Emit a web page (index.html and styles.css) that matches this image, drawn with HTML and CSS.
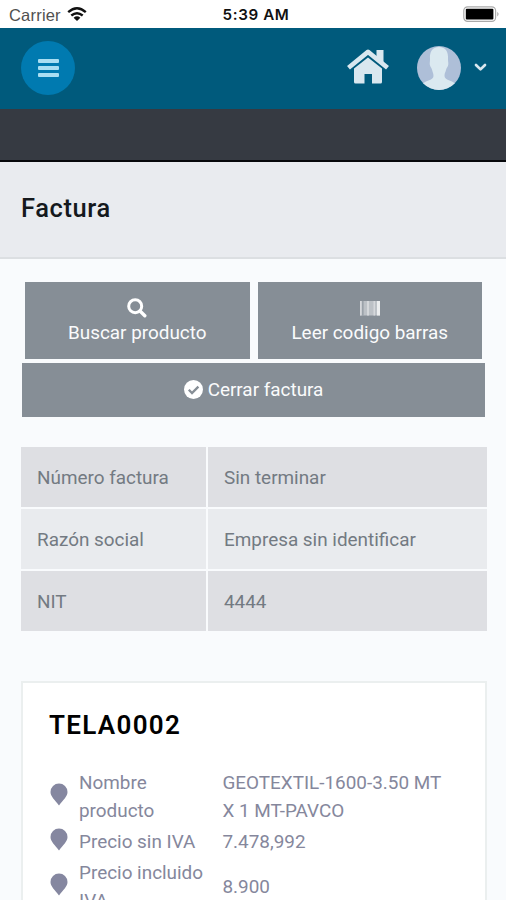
FILE: index.html
```html
<!DOCTYPE html>
<html lang="es">
<head>
<meta charset="utf-8">
<title>Factura</title>
<link rel="stylesheet" href="styles.css">
</head>
<body>
<div class="status">
  <div class="carrier"><span>Carrier</span>
    <svg class="wifi" width="20" height="15" viewBox="0 0 20 15"><path d="M1.2 5.200Q10-2.600 18.800 5.200M4.300 8.500Q10 3.800 15.700 8.500" fill="none" stroke="#111" stroke-width="2.400"/><path d="M6.600 10.700Q10 7.900 13.400 10.700L10 14z" fill="#111"/></svg>
  </div>
  <div class="clock">5:39 AM</div>
  <svg class="battery" width="37" height="17" viewBox="0 0 37 17"><rect x=".8" y=".8" width="31.800" height="14.600" rx="3.800" fill="#fff" stroke="#aaa" stroke-width="1.200"/><rect x="2.800" y="2.800" width="27.600" height="10.600" rx="1" fill="#000"/><path d="M34.400 5.800q2.200 2.300 0 4.600z" fill="#999"/></svg>
</div>
<header class="topbar">
  <div class="menu"><i></i><i></i><i></i></div>
  <svg class="home" width="44" height="35" viewBox="0 0 44 35"><path d="M2.500 18.700 22 2.900l19.500 15.800" fill="none" stroke="#d9e7ef" stroke-width="4.600" stroke-linejoin="round"/><path d="M30.500 1h7v13l-7-5.500zM8 19.500 22 8.500l14 11v13.500q0 1.500-1.500 1.500H26V25h-7.500v9.500h-9q-1.500 0-1.500-1.500z" fill="#d9e7ef"/></svg>
  <svg class="avatar" width="44" height="44" viewBox="0 0 44 44"><defs><clipPath id="disc"><circle cx="22" cy="22" r="22"/></clipPath></defs><g clip-path="url(#disc)"><path fill="#aebfd8" d="M0 0h44v44H0z"/><path d="M22 1c-7 0-9.500 5-9 12 .1 3-.8 4.500.2 7 .6 1.600 1.400 2 1.900 4 .5 2.300 1.300 3 1.400 6 .1 5-9.500 4-11.500 9v5h34v-5c-2-5-11.500-4-11.500-9 0-3 1-3.700 1.500-6 .5-2 1.300-2.400 1.900-4 1-2.500 0-4 .1-7C31.500 6 29 1 22 1z" fill="#dbe9f0"/></g></svg>
  <svg class="chev" width="13" height="9" viewBox="0 0 13 9"><path d="m2 2 4.500 4.400L11 2" fill="none" stroke="#d9e7ef" stroke-width="2.700" stroke-linecap="round" stroke-linejoin="round"/></svg>
</header>
<div class="band"></div>
<div class="heading"><h1>Factura</h1></div>
<main>
  <div class="actions">
    <div class="btn">
      <svg class="icon" width="20" height="20" viewBox="0 0 20 20"><circle cx="8.200" cy="8.200" r="6.500" fill="none" stroke="#fff" stroke-width="3"/><path d="m13 13 4.800 4.800" stroke="#fff" stroke-width="3.400" stroke-linecap="round"/></svg>
      <span>Buscar producto</span>
    </div>
    <div class="btn">
      <svg class="icon" width="20" height="20" viewBox="0 0 20 20"><path fill="#bcc1c6" d="M0 3h20v14.500H0z"/><path fill="#d5d8db" d="M0 3h1.500v14.500H0zM7 3h2v14.500H7zM13.500 3h1.500v14.500h-1.500z"/><path fill="#eceeef" d="M17 3h3v14.500h-3z"/><path fill="#929aa2" d="M2.200 3h1.300v14.500H2.200z"/></svg>
      <span>Leer codigo barras</span>
    </div>
  </div>
  <div class="btn wide">
    <svg width="19" height="19" viewBox="0 0 19 19"><circle cx="9.500" cy="9.500" r="9.500" fill="#fff"/><path d="m4.800 9.800 3.200 3.200 6.400-6.400" fill="none" stroke="#868e96" stroke-width="2.300"/></svg>
    <span>Cerrar factura</span>
  </div>
  <div class="info">
    <div>Número factura</div><div>Sin terminar</div>
    <div class="light">Razón social</div><div class="light">Empresa sin identificar</div>
    <div>NIT</div><div>4444</div>
  </div>
  <section class="card">
    <h2>TELA0002</h2>
    <div class="row"><svg class="pin" width="18" height="23" viewBox="0 0 18 23"><path d="M9 .5a8.500 8.500 0 0 1 8.500 8.500c0 4.500-4.500 8.200-8.500 13.500C5 17.200.5 13.500.5 9A8.500 8.500 0 0 1 9 .5z" fill="#8587a0"/></svg><div>Nombre producto</div><div>GEOTEXTIL-1600-3.50 MT X 1 MT-PAVCO</div></div>
    <div class="row"><svg class="pin" width="18" height="23" viewBox="0 0 18 23"><path d="M9 .5a8.500 8.500 0 0 1 8.500 8.500c0 4.500-4.500 8.200-8.500 13.500C5 17.200.5 13.500.5 9A8.500 8.500 0 0 1 9 .5z" fill="#8587a0"/></svg><div>Precio sin IVA</div><div>7.478,992</div></div>
    <div class="row"><svg class="pin" width="18" height="23" viewBox="0 0 18 23"><path d="M9 .5a8.500 8.500 0 0 1 8.500 8.500c0 4.500-4.500 8.200-8.500 13.500C5 17.200.5 13.500.5 9A8.500 8.500 0 0 1 9 .5z" fill="#8587a0"/></svg><div>Precio incluido IVA</div><div>8.900</div></div>
  </section>
</main>
</body>
</html>
```
FILE: styles.css
```css
* { box-sizing: border-box; }
body { margin: 0; height: 900px; overflow: hidden; background: #f9fbfd; font: 18.9px/24px Roboto, sans-serif; }
svg { display: block; flex: none; }
h1, h2 { margin: 0; font-weight: 500; }

.status { height: 28px; background: #fff; display: grid; grid-template-columns: 1fr auto 1fr; align-items: center; padding: 0 5px 0 9px; }
.carrier { display: flex; align-items: center; gap: 7px; font: 16.5px/28px "Liberation Sans", sans-serif; letter-spacing: .2px; color: #505050; }
.wifi { margin: -1px 0 0 -1px; }
.clock { font: 600 15.2px/28px Inter, sans-serif; letter-spacing: .6px; color: #111; padding: 1px 0 0 2px; }
.battery { justify-self: end; margin-right: 1px; }

.topbar { height: 81px; background: #005a7c; display: flex; align-items: center; padding: 0 19px 0 21px; }
.menu { width: 54px; height: 54px; margin: -1px auto 0 0; border-radius: 50%; background: #007ab0; display: flex; flex-direction: column; align-items: center; justify-content: center; gap: 3px; }
.menu i { width: 21px; height: 4px; border-radius: 1px; background: #a9def2; }
.home { margin: -4px 27px 0 0; }
.avatar { margin: -1px 13px 0 0; }
.chev { margin-top: -3px; }

.band { height: 53px; background: #363a42; border-bottom: 2px solid #07080b; }
.heading { height: 97px; background: #e9ebef; border-bottom: 2px solid #dcdfe2; padding: 30px 21px 0; }
.heading h1 { font-size: 25.5px; line-height: 32px; color: #15191d; letter-spacing: .6px; }

main { padding: 23px 19px 0 21px; }
.actions { display: grid; grid-template-columns: 1fr 1fr; gap: 8px; padding: 0 5px 0 4px; }
.btn { height: 77px; background: #868e96; color: #fafbfc; display: flex; flex-direction: column; align-items: center; padding-top: 16px; }
.btn .icon { margin-bottom: 3px; }
.wide { height: 54px; margin: 4px 2px 0 1px; flex-direction: row; justify-content: center; gap: 5px; padding: 0; }
.wide svg { margin-top: -1px; }

.info { margin-top: 30px; display: grid; grid-template-columns: 185px 1fr; grid-template-rows: 60px 60px 60px; gap: 2px; color: #737a82; }
.info > div { display: flex; align-items: center; padding: 1px 0 0 16px; background: #dedfe3; }
.info > .light { background: #e9ebee; }

.card { height: 260px; margin-top: 50px; background: #fff; border: 2px solid #ebefef; padding: 26px 40px 0 27px; color: #85879c; line-height: 28px; }
.card h2 { font-size: 26px; line-height: 32px; font-weight: 600; color: #000; letter-spacing: 1.3px; margin: 0 0 28px -1px; }
.row { display: grid; grid-template-columns: 18px 132.500px 1fr; column-gap: 11px; align-items: center; margin-bottom: 3px; }
.pin { margin: -5px 0 0 -.5px; }
```
